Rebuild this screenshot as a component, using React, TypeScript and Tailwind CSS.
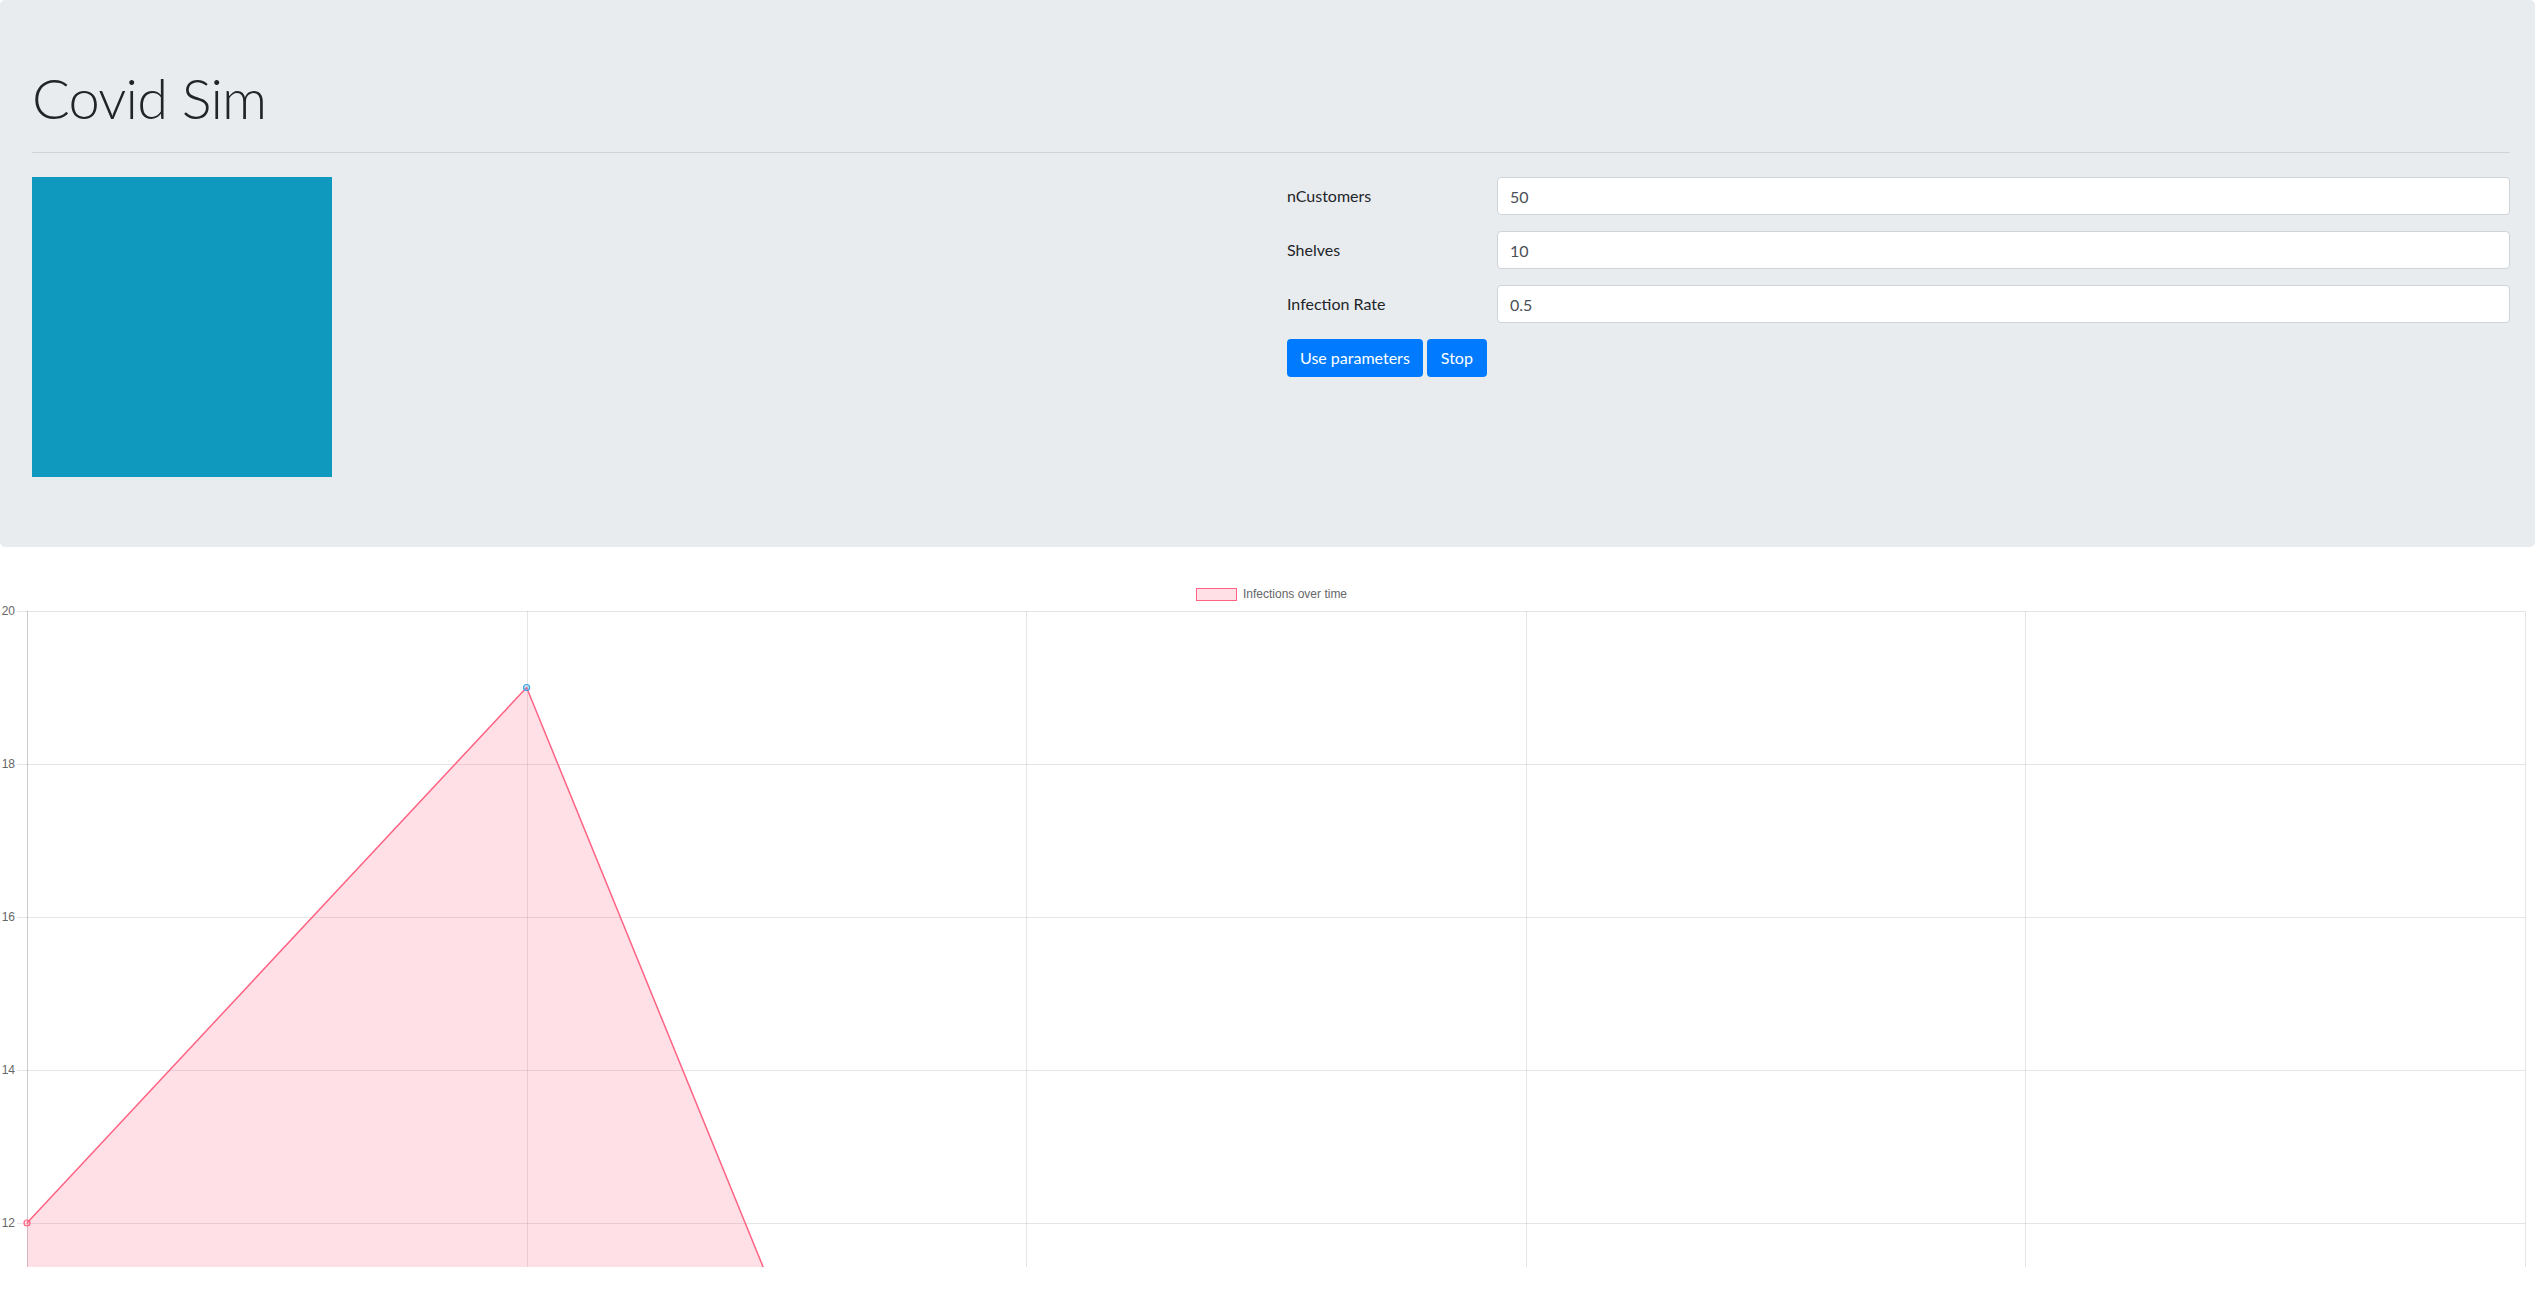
import React from "react";

// chart geometry, in px of the chart svg (svg top sits right under the jumbotron)
const gridLeft = 27;
const colStep = 499.6;
const top = 64;
const unit = 76.5;
const plotBottom = 720;

const toY = (v: number) => top + (20 - v) * unit;
const toX = (i: number) => gridLeft + i * colStep;

const infections = [12, 19, 3];
const yTicks = [20, 18, 16, 14, 12];

function InfectionChart() {
    const pts = infections.map((v, i) => [toX(i), toY(v)]);
    const line = pts.map((p) => p.join(",")).join(" ");
    const fill = `${line} ${pts[pts.length - 1][0]},2400 ${gridLeft},2400`;

    return (
        <svg width={2540} height={plotBottom} className="block">
            {/* legend */}
            <rect x={1196.5} y={41.5} width={40} height={12} fill="rgba(255,99,132,0.2)" stroke="rgb(255,99,132)" strokeWidth={1} />
            <text x={1243} y={47.5} dominantBaseline="middle" fontSize={12} fill="#666" fontFamily="'Liberation Sans', Arial, sans-serif">
                Infections over time
            </text>

            {/* horizontal grid + y ticks */}
            {yTicks.map((t) => (
                <g key={t}>
                    <line x1={17} x2={toX(5)} y1={toY(t) + 0.5} y2={toY(t) + 0.5} stroke="rgba(0,0,0,0.1)" />
                    <text x={15} y={toY(t) + 1} textAnchor="end" dominantBaseline="middle" fontSize={12} fill="#666" fontFamily="'Liberation Sans', Arial, sans-serif">
                        {t}
                    </text>
                </g>
            ))}

            {/* vertical grid */}
            {[0, 1, 2, 3, 4, 5].map((i) => (
                <line
                    key={i}
                    x1={Math.round(toX(i)) + 0.5}
                    x2={Math.round(toX(i)) + 0.5}
                    y1={top}
                    y2={plotBottom}
                    stroke={i === 0 ? "rgba(0,0,0,0.2)" : "rgba(0,0,0,0.1)"}
                />
            ))}

            {/* dataset */}
            <polygon points={fill} fill="rgba(255,99,132,0.2)" />
            <polyline points={line} fill="none" stroke="rgb(255,99,132)" strokeWidth={1.5} />
            <circle cx={pts[0][0]} cy={pts[0][1]} r={3} fill="rgba(255,99,132,0.2)" stroke="rgb(255,99,132)" strokeWidth={1.2} />
            <circle cx={pts[1][0]} cy={pts[1][1]} r={3} fill="rgba(54,162,235,0.2)" stroke="rgb(54,162,235)" strokeWidth={1.2} />
        </svg>
    );
}

function ParamRow({ label, value }: { label: string; value: string }) {
    return (
        <div className="flex items-center mb-4">
            <label className="w-[210px] shrink-0 text-[16px] text-[#212529]">{label}</label>
            <input
                className="flex-1 h-[38px] px-3 bg-white border border-[#ced4da] rounded-[4px] text-[16px] text-[#495057] outline-none"
                type="text"
                defaultValue={value}
            />
        </div>
    );
}

export default function App() {
    return (
        <main className="min-h-screen bg-white font-['Lato','Noto_Sans',sans-serif]">
            {/* Jumbotron */}
            <div className="w-[2535px] bg-[#e9ecef] rounded-[5px] pt-16 pl-8 pr-[25px] pb-[70px]">
                <h1 className="text-[56px] leading-[67px] font-light tracking-[-0.8px] text-[#212529]">Covid Sim</h1>
                <hr className="mt-[21px] border-0 border-t border-[rgba(0,0,0,0.1)]" />

                <div className="flex mt-6">
                    <div className="w-[1254px] shrink-0">
                        <div className="w-[300px] h-[300px] bg-[#1099bf]" />
                    </div>

                    <div className="flex-1 pl-[1px]">
                        <ParamRow label="nCustomers" value="50" />
                        <ParamRow label="Shelves" value="10" />
                        <ParamRow label="Infection Rate" value="0.5" />
                        <div className="flex gap-1">
                            <button className="h-[38px] px-[13px] rounded-[4px] bg-[#007bff] text-white text-[16px]">Use parameters</button>
                            <button className="h-[38px] px-[14px] rounded-[4px] bg-[#007bff] text-white text-[16px]">Stop</button>
                        </div>
                    </div>
                </div>
            </div>

            {/* Chart */}
            <InfectionChart />
        </main>
    );
}
